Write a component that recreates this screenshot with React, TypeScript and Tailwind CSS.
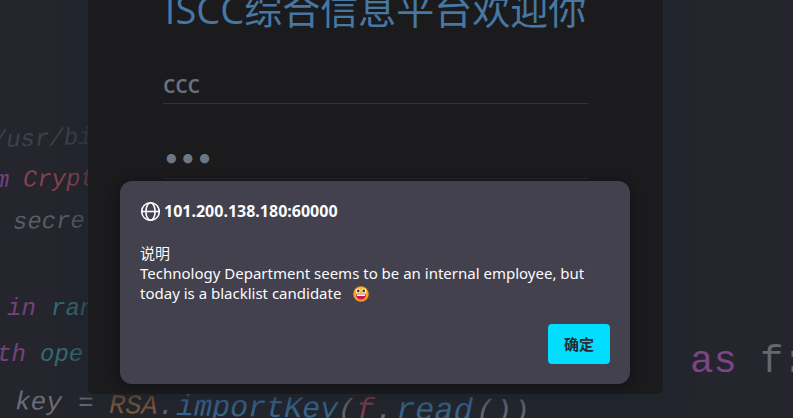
function CodeBackdrop() {
  return (
    <svg
      className="absolute inset-0 h-full w-full font-['Liberation_Mono',monospace] text-[24px]"
      aria-hidden="true"
    >
      <g fontStyle="italic">
        <text x="-8" y="147" fill="#3f4049" transform="rotate(-2 0 147)">/usr/bi</text>
        <g transform="rotate(-1 0 187)">
          <text x="-5" y="187" fill="#75417f">m</text>
          <text x="23" y="187" fill="#86424c">Crypt</text>
        </g>
        <text x="13" y="229" fill="#5a5b64" transform="rotate(-1 0 229)">secre</text>
        <text x="7" y="315" fill="#75417f">in</text>
        <text x="51" y="315" fill="#356b75">ran</text>
        <text x="-3" y="361" fill="#75417f">th</text>
        <text x="40" y="361" fill="#356b75">ope</text>
        <g transform="rotate(1 0 409)">
          <text x="15" y="409" fill="#6b6c75" fontSize="26">key</text>
          <text x="78" y="409" fill="#6b6c75" fontSize="26">=</text>
          <text x="109" y="411" fill="#855e3c" fontSize="27">RSA</text>
          <text x="158" y="411" fill="#6b6c75" fontSize="27">.</text>
          <text x="176" y="412" fill="#376a96" fontSize="30">importKey</text>
          <text x="338" y="412" fill="#6b6c75" fontSize="28">(</text>
          <text x="356" y="412" fill="#86424c" fontSize="30">f</text>
          <text x="375" y="412" fill="#6b6c75" fontSize="30">.</text>
          <text x="396" y="412" fill="#376a96" fontSize="32">read</text>
          <text x="476" y="412" fill="#6b6c75" fontSize="30">()</text>
          <text x="512" y="412" fill="#6b6c75" fontSize="30">)</text>
        </g>
      </g>
      <text x="690" y="372" fill="#7b4587" fontSize="39">as</text>
      <text x="760" y="372" fill="#666870" fontSize="39">f</text>
      <text x="782" y="372" fill="#666870" fontSize="39">:</text>
    </svg>
  );
}

function Globe() {
  return (
    <svg
      className="size-5 shrink-0"
      viewBox="0 0 20 20"
      fill="none"
      stroke="currentColor"
      strokeWidth="1.6"
      aria-hidden="true"
    >
      <circle cx="10.5" cy="10.5" r="8.8" />
      <ellipse cx="10.5" cy="10.5" rx="4.6" ry="8.8" />
      <path d="M1.7 10.5h17.6" />
    </svg>
  );
}

function Grin() {
  return (
    <svg className="ml-2 inline-block size-4 align-[-3px]" viewBox="0 0 16 16" role="img" aria-label="grin">
      <circle cx="8" cy="8" r="7.8" fill="#f7941d" />
      <circle cx="8" cy="7.6" r="6.5" fill="#fdb52a" />
      <circle cx="5.1" cy="4.8" r="2.3" fill="#fff" />
      <circle cx="10.9" cy="4.8" r="2.3" fill="#fff" />
      <circle cx="5.3" cy="4.9" r="1.3" fill="#402a32" />
      <circle cx="10.7" cy="4.9" r="1.3" fill="#402a32" />
      <path d="M3 8.5h10c0 3.2-2 5-5 5s-5-1.8-5-5Z" fill="#c2185b" />
      <path d="M4 8.5h8v1.5H4Z" fill="#fff" />
    </svg>
  );
}

export default function App() {
  return (
    <main className="relative h-screen overflow-hidden bg-[#24252d] pr-[130px] pl-[88px] font-['Noto_Sans','Noto_Sans_CJK_SC',sans-serif]">
      <CodeBackdrop />
      <div className="relative">
        <form className="-mt-4 flex h-[410px] flex-col rounded-md bg-[#1b1b1e] px-[75px] shadow-[0_0_30px_#20262e]">
          <h1 className="text-center font-['Open_Sans','Noto_Sans_CJK_SC',sans-serif] text-[38px] leading-[50px] whitespace-nowrap text-[#4777a3]">
            ISCC综合信息平台欢迎你
          </h1>
          <input
            type="text"
            aria-label="用户名"
            defaultValue="ccc"
            className="mt-[34px] h-9 w-full border-b border-[#343438] bg-transparent pb-1 text-[25px] font-medium text-[#68727d] outline-none"
          />
          <input
            type="password"
            aria-label="密码"
            defaultValue="ccc"
            className="mt-[39px] h-9 w-full border-b border-[#2c2c30] bg-transparent font-['DejaVu_Sans',sans-serif] text-[26px] font-bold text-[#6c7783] outline-none"
          />
        </form>
        <section
          role="alertdialog"
          aria-labelledby="origin"
          aria-describedby="message"
          className="absolute top-[197px] right-[33px] left-8 rounded-xl bg-[#42414d] p-5 text-[15px] leading-5 text-[#fbfbfe] shadow-[0_2px_12px_#111114]"
        >
          <h2 id="origin" className="flex items-center gap-1 text-[16px] font-bold">
            <Globe />
            101.200.138.180:60000
          </h2>
          <div id="message" className="mt-[22px]">
            <p>说明</p>
            <p>
              Technology Department seems to be an internal employee, but today is a blacklist candidate <Grin />
            </p>
          </div>
          <div className="mt-[21px] flex justify-end">
            <button type="button" className="h-10 rounded bg-[#00ddff] px-4 font-bold text-[#2b2a33]">
              确定
            </button>
          </div>
        </section>
      </div>
    </main>
  );
}
